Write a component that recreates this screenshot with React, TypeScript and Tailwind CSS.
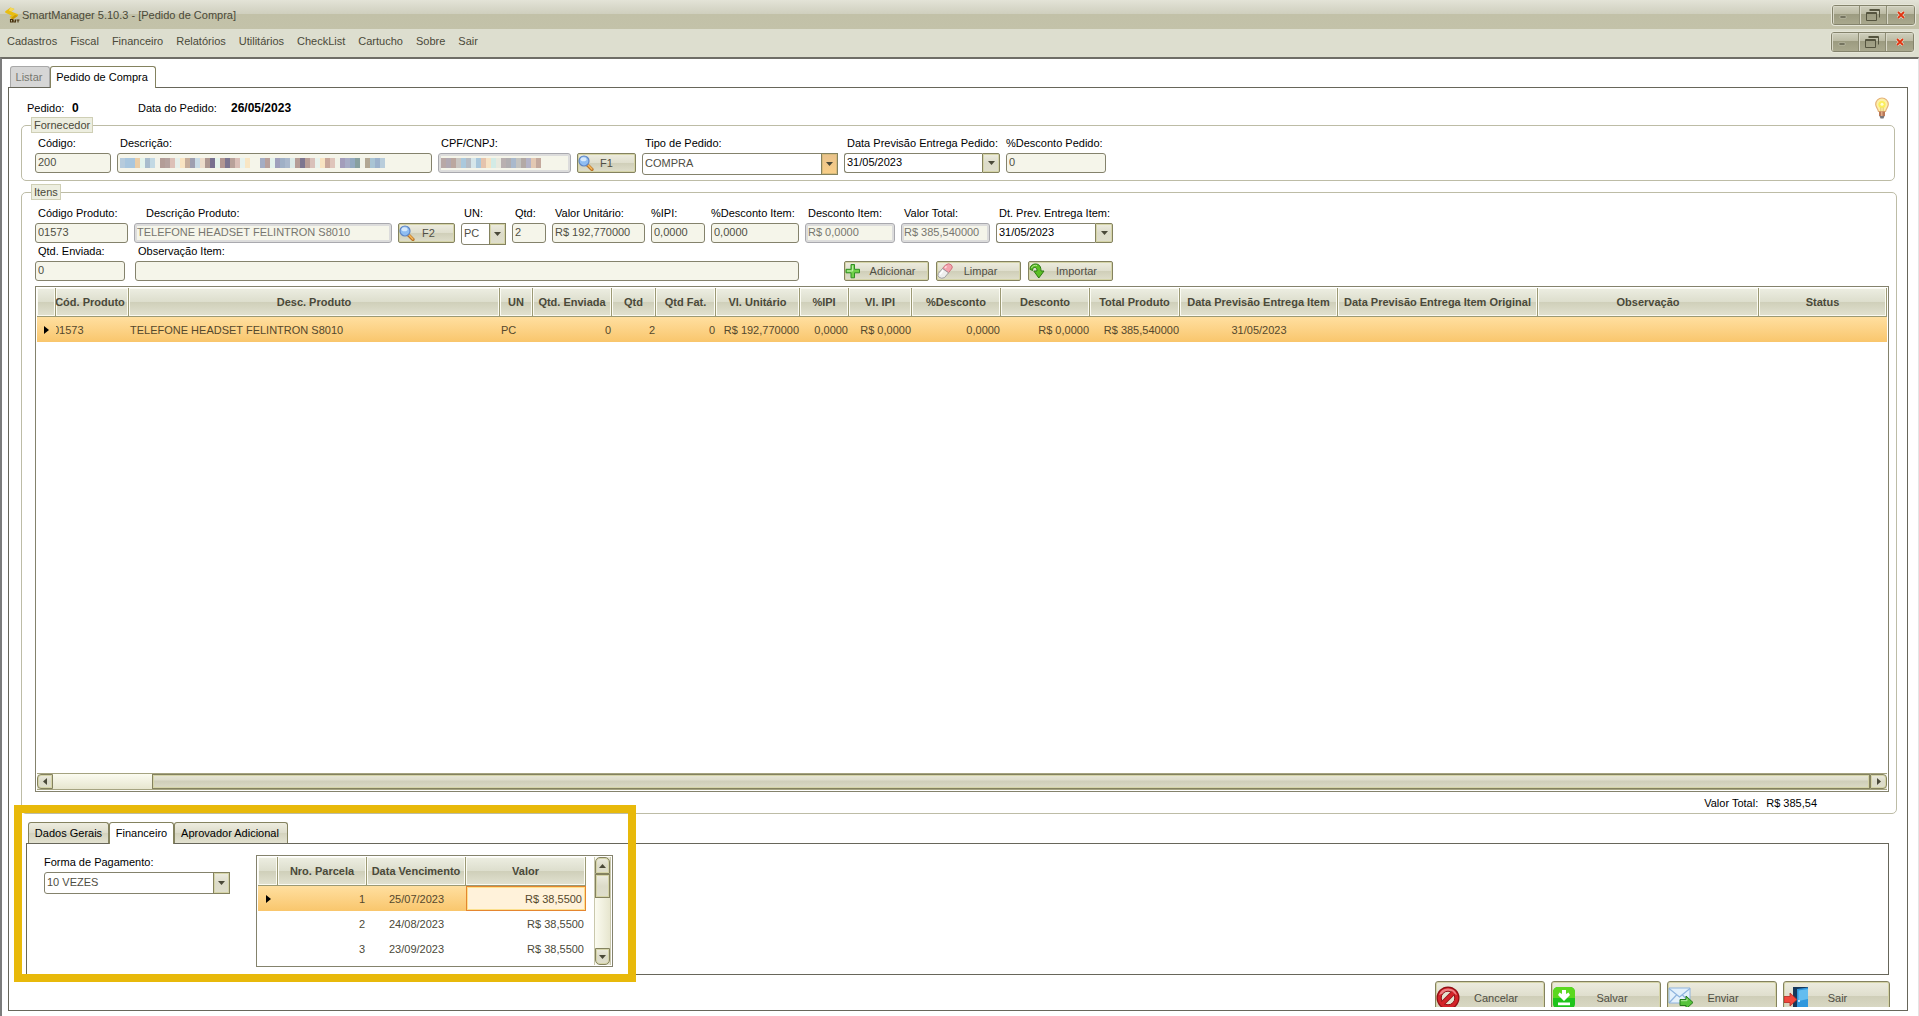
import type { ReactNode } from "react";

type Align = "left" | "center" | "right";

type Column = Readonly<{
  title: string;
  width?: number;
  align: Align;
  value: string;
}>;

const menuItems = [
  "Cadastros",
  "Fiscal",
  "Financeiro",
  "Relatórios",
  "Utilitários",
  "CheckList",
  "Cartucho",
  "Sobre",
  "Sair",
];

const columns: Column[] = [
  { title: "Cód. Produto", width: 73, align: "left", value: "01573" },
  {
    title: "Desc. Produto",
    width: 371,
    align: "left",
    value: "TELEFONE HEADSET FELINTRON S8010",
  },
  { title: "UN", width: 33, align: "left", value: "PC" },
  { title: "Qtd. Enviada", width: 79, align: "right", value: "0" },
  { title: "Qtd", width: 44, align: "right", value: "2" },
  { title: "Qtd Fat.", width: 60, align: "right", value: "0" },
  { title: "Vl. Unitário", width: 84, align: "right", value: "R$ 192,770000" },
  { title: "%IPI", width: 49, align: "right", value: "0,0000" },
  { title: "Vl. IPI", width: 63, align: "right", value: "R$ 0,0000" },
  { title: "%Desconto", width: 89, align: "right", value: "0,0000" },
  { title: "Desconto", width: 89, align: "right", value: "R$ 0,0000" },
  { title: "Total Produto", width: 90, align: "right", value: "R$ 385,540000" },
  {
    title: "Data Previsão Entrega Item",
    width: 158,
    align: "center",
    value: "31/05/2023",
  },
  {
    title: "Data Previsão Entrega Item Original",
    width: 200,
    align: "center",
    value: "",
  },
  { title: "Observação", width: 221, align: "left", value: "" },
  { title: "Status", align: "left", value: "" },
];

const installments = [
  { number: 1, dueDate: "25/07/2023", amount: "R$ 38,5500" },
  { number: 2, dueDate: "24/08/2023", amount: "R$ 38,5500" },
  { number: 3, dueDate: "23/09/2023", amount: "R$ 38,5500" },
];

const supplierMask = [
  "#b6cbdc", "#a8c6de", "#a8c6de", "#eacda6", "#e4f3ec", "#a9bccd", "#c3d9e4",
  "#f3f3ea", "#b39d97", "#b5a29e", "#dcc0b7", "#e7efea", "#f9e4c2", "#c7ae9b",
  "#9e9fb0", "#c9dbe6", "#ecdccb", "#ad9791", "#77708f", "#e4f3ec", "#b39792",
  "#7c7590", "#b8a19a", "#dabfb8", "#e7f2ee", "#f9e6c4", "#f5f5ea", "#f5f5ea",
  "#a4adc4", "#b8a09b", "#e4f1ec", "#9f9fbc", "#9fb0c6", "#a9b8cc", "#dceae8",
  "#b59d97", "#7d7690", "#b99e97", "#d9c1ba", "#e9f2ec", "#f8e3c1", "#c9a79a",
  "#dfc5bb", "#f1f3e8", "#a39dbb", "#a7acc6", "#93a9c0", "#87a09f", "#f0f2e8",
  "#b1a794", "#a9c4d4", "#9cb2cc", "#b9cddb",
];

const documentMask = [
  "#b8a8a6", "#b1a9b2", "#bba79f", "#c9c6c2", "#abc9dd", "#b6bcc4", "#d6e6ea",
  "#a9c7dc", "#e5c3ac", "#f6e2c4", "#d3ebe6", "#e8e9de", "#b9b0b0", "#b1aeb0",
  "#a9b9cc", "#c3c3c0", "#b3a9a5", "#b4b3c6", "#e3c8b2", "#c4a99d",
];

const raised =
  "border border-[#84825f] bg-linear-to-b from-[#edecdf] from-0% via-[#dcdbc9] via-50% to-[#dfdecb] shadow-[inset_0_0_0_1px_#d5d4a8]";
const headCell =
  "h-[29px] overflow-hidden border-r border-b border-[#9b9974] bg-[linear-gradient(#edeee2_0%,#dddecd_49%,#cfcfb9_50%,#e2e2d1_100%)] p-0 text-center font-bold text-[#4a4939] shadow-[inset_1px_1px_0_#fbfbf3,inset_-1px_-1px_0_#fbfbf3]";

function Field({
  id,
  label,
  className = "",
  labelClass = "pl-[3px]",
  children,
}: Readonly<{
  id: string;
  label: string;
  className?: string;
  labelClass?: string;
  children: ReactNode;
}>) {
  return (
    <div className={`flex shrink-0 flex-col gap-0.5 ${className}`}>
      <label
        htmlFor={id}
        className={`h-4 leading-4 whitespace-nowrap text-black ${labelClass}`}
      >
        {label}
      </label>
      {children}
    </div>
  );
}

function TextBox({
  id,
  value = "",
  disabled = false,
}: Readonly<{ id: string; value?: string; disabled?: boolean }>) {
  return (
    <input
      id={id}
      type="text"
      defaultValue={value}
      disabled={disabled}
      className="h-5 w-full rounded-[3px] border border-[#84826c] bg-[#f5f5ea] pb-0.5 pl-0.5 text-[#4f4e44] disabled:border-[#a9a9ae] disabled:text-[#77766f] disabled:shadow-[inset_0_0_0_2px_#dcdcdc]"
    />
  );
}

// Text box whose contents are hidden behind a mosaic
function MaskedBox({
  id,
  blocks,
  disabled = false,
}: Readonly<{ id: string; blocks: string[]; disabled?: boolean }>) {
  return (
    <div className="relative">
      <TextBox id={id} disabled={disabled} />
      <div className="pointer-events-none absolute top-[5px] left-[3px] flex h-2.5">
        {blocks.map((color, i) => (
          <span key={i} className="w-[5px]" style={{ backgroundColor: color }} />
        ))}
      </div>
    </div>
  );
}

function DownArrow() {
  return (
    <svg viewBox="0 0 7 4" className="h-1 w-[7px]" aria-hidden="true">
      <path d="M0 0h7L3.5 4z" fill="#4a4939" />
    </svg>
  );
}

function ComboBox({
  id,
  value,
  hot = false,
}: Readonly<{ id: string; value: string; hot?: boolean }>) {
  return (
    <div className="relative h-[22px]">
      <select
        id={id}
        defaultValue={value}
        className="h-full w-full appearance-none rounded-[3px] border border-[#84826c] bg-white pb-0.5 pl-0.5 text-[#4f4e44]"
      >
        <option>{value}</option>
      </select>
      <span
        className={`pointer-events-none absolute inset-y-0 right-0 flex w-[17px] items-center justify-center ${
          hot
            ? "border border-[#84825f] bg-linear-to-b from-[#e9c28c] to-[#f9cf87] shadow-[inset_0_0_0_1px_#d8bb7c]"
            : raised
        }`}
      >
        <DownArrow />
      </span>
    </div>
  );
}

function DateBox({ id, value }: Readonly<{ id: string; value: string }>) {
  return (
    <div className="flex h-5">
      <input
        id={id}
        type="text"
        defaultValue={value}
        className="h-5 w-full min-w-0 rounded-l-[3px] border border-r-0 border-[#84826c] bg-white pb-0.5 pl-0.5 text-black"
      />
      <button
        type="button"
        aria-label="Abrir calendário"
        className={`flex w-[18px] shrink-0 items-center justify-center rounded-r-[2px] ${raised}`}
      >
        <DownArrow />
      </button>
    </div>
  );
}

function ToolButton({
  icon,
  label,
  className,
  labelClass = "pr-1",
}: Readonly<{
  icon: ReactNode;
  label: string;
  className: string;
  labelClass?: string;
}>) {
  return (
    <button
      type="button"
      className={`flex h-5 shrink-0 items-center rounded-[2px] border border-[#84825f] bg-[linear-gradient(#edecdf_0%,#dfdecd_49%,#cfceb8_50%,#dfdecb_100%)] text-[#4f4e44] shadow-[inset_0_0_0_1px_#d5d4a8] ${className}`}
    >
      {icon}
      <span className={`flex-1 text-center ${labelClass}`}>{label}</span>
    </button>
  );
}

function SearchIcon() {
  return (
    <svg viewBox="0 0 16 16" className="size-4 shrink-0" aria-hidden="true">
      <path d="M9.5 10l4.500 4.500" stroke="#b9742a" strokeWidth="3.200" strokeLinecap="round" />
      <path d="M10 10l3.800 4" stroke="#f5b95a" strokeWidth="1.600" strokeLinecap="round" />
      <circle cx="6" cy="6" r="5" fill="#8fbdf2" stroke="#5f86c4" strokeWidth="1.200" />
      <ellipse cx="5.500" cy="4.200" rx="3" ry="2" fill="#d7e9fc" />
    </svg>
  );
}

function PlusIcon() {
  return (
    <svg viewBox="0 0 16 16" className="size-4 shrink-0" aria-hidden="true">
      <path
        d="M6 1.500h3.500v4.800h5v3.500h-5v5H6v-5H1V6.300h5z"
        fill="#6fd14a"
        stroke="#2f8f22"
        strokeLinejoin="round"
      />
      <path d="M7.700 2.500v5.500H2" stroke="#c9f2b4" fill="none" />
    </svg>
  );
}

function EraserIcon() {
  return (
    <svg viewBox="0 0 16 16" className="size-4 shrink-0" aria-hidden="true">
      <path d="M8.500 2Q12-.5 14.200 1.800T14.500 6L11.500 9.800 5.500 5.500z" fill="#f3a3ad" stroke="#c9636f" strokeWidth=".8" />
      <path d="M5.500 5.500l6 4.300-4 4.800q-3 1.400-5.200-.2T1.300 10.500z" fill="#eeeeee" stroke="#8d8d92" strokeWidth=".8" />
      <path d="M6.200 7.200L3 11.500" stroke="#ffffff" strokeWidth="1.600" />
      <path d="M9.500 3.200L8 5" stroke="#fcd9dd" strokeWidth="1.600" />
    </svg>
  );
}

function ImportIcon() {
  return (
    <svg viewBox="0 0 16 16" className="size-4 shrink-0" aria-hidden="true">
      <path
        d="M1 6.500C1 2.500 4 .8 7 1c3.500.2 5 2.800 5 7h3l-5.200 7L4.800 8H8c0-2.500-.8-3.500-2.300-3.500S3.500 5.300 3.700 7.500z"
        fill="#5cbf25"
        stroke="#2c7a12"
        strokeLinejoin="round"
      />
      <path d="M2.500 5C3.500 2.500 6 2 8 2.500" stroke="#b5e88f" fill="none" />
    </svg>
  );
}

function BulbIcon() {
  return (
    <svg viewBox="0 0 16 22" className="h-[22px] w-4" role="img" aria-label="Dica">
      <path
        d="M8 1a6.300 6.300 0 0 0-6.300 6.300c0 2.700 2 3.900 2.800 7.200h7c.8-3.300 2.800-4.500 2.800-7.200A6.300 6.300 0 0 0 8 1z"
        fill="#fdf0a8"
        stroke="#e5b27a"
        strokeWidth="1.200"
      />
      <circle cx="8" cy="7.500" r="3.600" fill="#fbee5c" />
      <circle cx="8" cy="7.300" r="1.500" fill="#fffdd8" />
      <path d="M6.800 10.500v4M9.200 10.500v4" stroke="#d9c069" strokeWidth=".8" />
      <path d="M5 14.500h6V19H5z" fill="#b97858" />
      <path d="M7 14.500h1.500V19H7z" fill="#e0ab8a" />
      <path d="M5.500 19h5L9.500 21.500h-3z" fill="#77777c" />
    </svg>
  );
}

function AppLogo() {
  return (
    <svg viewBox="0 0 16 16" className="size-4" aria-hidden="true">
      <path
        d="M6.500.5L1.300 4.300q-.6 1 .5 1.700l6 2.400L5.500 10l3.200 2.600 5.200-3.800q.5-1-.6-1.800L7.200 4.400 10.500 2z"
        fill="#e8bd12"
      />
      <path d="M6.500.5L10.500 2 7.200 4.400 4.800 3.500z" fill="#f5d95a" />
      <path d="M11 8l2.900.8-5.200 3.800L7 11.200z" fill="#c99a08" />
      <path
        d="M6.500 12.500h2v2.500h-2zM9.800 12.500V15h1.700v-2.500M12.500 13h3M14 13v2.500"
        fill="none"
        stroke="#4a3410"
        strokeWidth="1.100"
      />
    </svg>
  );
}

function CancelIcon() {
  return (
    <svg viewBox="0 0 24 24" className="size-6 shrink-0" aria-hidden="true">
      <circle cx="12" cy="12" r="11.500" fill="#8f1014" />
      <circle cx="12" cy="12" r="10.300" fill="#d4232a" />
      <path d="M3 9a9.500 9.500 0 0 1 18 0Q12 4 3 9z" fill="#ee7f82" />
      <circle cx="12" cy="12" r="6.800" fill="#e3e2d0" stroke="#8f1014" />
      <path d="M7 17L17 7" stroke="#8f1014" strokeWidth="5" />
      <path d="M6.500 17.500l11-11" stroke="#d4232a" strokeWidth="3.400" />
    </svg>
  );
}

function SaveIcon() {
  return (
    <svg viewBox="0 0 24 24" className="size-6 shrink-0" aria-hidden="true">
      <rect x="1" y="1" width="22" height="22" rx="5" fill="#1fc41c" />
      <path d="M1 12V6a5 5 0 0 1 5-5h12a5 5 0 0 1 5 5v6z" fill="#5bd81f" />
      <path d="M10 4h4v4l2.500-1.500L18 9l-6 6-6-6 1.500-2.500L10 8zM6 16.500h12v2.800H6z" fill="#ffffff" />
    </svg>
  );
}

function SendIcon() {
  return (
    <svg viewBox="0 0 26 24" className="h-6 w-[26px] shrink-0" aria-hidden="true">
      <path d="M1 2h21v15H1z" fill="#e3f0fb" stroke="#8fb4de" />
      <path d="M1 2.500l10.500 8.500L22 2.500M1 17l7.500-8M22 17l-7.500-8" fill="none" stroke="#8fb4de" strokeWidth="1.200" />
      <path d="M12 13.500h6V10l7 6.500-7 6.500v-3.500h-6z" fill="#56c23a" stroke="#24791a" strokeLinejoin="round" />
      <path d="M13 14.700h6v-2.200" stroke="#b4e99f" fill="none" />
    </svg>
  );
}

function ExitIcon() {
  return (
    <svg viewBox="0 0 26 24" className="h-6 w-[26px] shrink-0" aria-hidden="true">
      <path d="M9 1h15v23H9z" fill="#17375a" />
      <path d="M13 3l11-1.500V24H13z" fill="#2f97dd" />
      <path d="M14.500 4.500L24 3v10l-9.500 2z" fill="#63bdf0" />
      <circle cx="15" cy="15" r="1" fill="#e8f6ff" />
      <path d="M0 10.500h6V7l7 6.500L6 20v-3.500H0z" fill="#f0473c" stroke="#b82a22" strokeWidth=".8" />
    </svg>
  );
}

function WindowButtons() {
  const button =
    "flex h-[18px] w-[27px] items-center justify-center border-r border-[#8d8c74] bg-[linear-gradient(#cfcfbd_0%,#bcbba4_44%,#9c9b80_45%,#a9a88d_100%)] shadow-[inset_1px_1px_0_#d9d8c8] last:border-r-0";
  return (
    <div className="flex overflow-hidden rounded-[3px] border border-[#84836c] shadow-[0_0_0_1px_#e6e6d8]">
      <button type="button" aria-label="Minimizar" className={button}>
        <svg viewBox="0 0 16 12" className="h-3 w-4">
          <path d="M2 7h6v2H2z" fill="#55543f" stroke="#d5d4c4" strokeWidth=".5" />
        </svg>
      </button>
      <button type="button" aria-label="Restaurar" className={button}>
        <svg viewBox="0 0 16 14" className="h-3.5 w-4" fill="none" stroke="#55543f">
          <path d="M4.500 1.500h10v8M4.500 2.500h10" />
          <path d="M1.500 4.500h10v8h-10zM1.500 5.500h10" />
        </svg>
      </button>
      <button type="button" aria-label="Fechar" className={button}>
        <svg viewBox="0 0 10 8" className="h-2 w-2.5">
          <path d="M2 1l6 6M8 1L2 7" stroke="#f3e6d8" strokeWidth="3" />
          <path d="M2 1l6 6M8 1L2 7" stroke="#e0330f" strokeWidth="1.800" />
        </svg>
      </button>
    </div>
  );
}

function RowMarker() {
  return (
    <svg viewBox="0 0 5 8" className="mx-auto h-2 w-[5px]" aria-hidden="true">
      <path d="M0 0l5 4-5 4z" fill="#000000" />
    </svg>
  );
}

const alignClass: Record<Align, string> = {
  left: "text-left",
  center: "text-center",
  right: "text-right",
};

function ItemsGrid() {
  return (
    <div className="mt-[5px] flex flex-1 flex-col border border-[#84826c] p-px">
      <table className="w-full table-fixed border-separate border-spacing-0">
        <colgroup>
          <col className="w-[19px]" />
          {columns.map((column) => (
            <col key={column.title} style={{ width: column.width }} />
          ))}
        </colgroup>
        <thead>
          <tr>
            <th className={headCell} aria-label="Linha atual" />
            {columns.map((column, i) => (
              <th key={column.title} scope="col" className={headCell}>
                <span
                  className={`flex justify-center whitespace-nowrap ${i === 0 ? "-ml-1" : ""}`}
                >
                  {column.title}
                </span>
              </th>
            ))}
          </tr>
        </thead>
        <tbody>
          <tr className="bg-linear-to-b from-[#ffdf9f] to-[#f9c66c] text-[#55482c]">
            <td className="h-[25px] p-0">
              <RowMarker />
            </td>
            {columns.map((column, i) => (
              <td
                key={column.title}
                className={`overflow-hidden p-0 px-px whitespace-nowrap ${alignClass[column.align]}`}
              >
                <span className={i === 0 ? "-ml-1" : ""}>{column.value}</span>
              </td>
            ))}
          </tr>
        </tbody>
      </table>
      <div className="mt-auto flex h-[17px] border-y border-[#a5a380] bg-linear-to-b from-[#fbfbf0] to-[#e7e6cf]">
        <button
          type="button"
          aria-label="Rolar para a esquerda"
          className={`flex w-4 items-center justify-center rounded-l-[4px] ${raised}`}
        >
          <svg viewBox="0 0 4 7" className="h-[7px] w-1">
            <path d="M4 0v7L0 3.500z" fill="#4a4939" />
          </svg>
        </button>
        <div className="w-[99px]" />
        <div className="flex-1 border border-[#84825f] bg-[linear-gradient(#e9e8d8_0%,#dddcca_40%,#cfceb9_45%,#dbdac5_100%)] shadow-[inset_0_0_0_1px_#d5d4a8]" />
        <button
          type="button"
          aria-label="Rolar para a direita"
          className={`flex w-[17px] items-center justify-center rounded-r-[4px] ${raised}`}
        >
          <svg viewBox="0 0 4 7" className="h-[7px] w-1">
            <path d="M0 0v7l4-3.500z" fill="#4a4939" />
          </svg>
        </button>
      </div>
    </div>
  );
}

function InstallmentsGrid() {
  return (
    <div className="flex h-28 w-[357px] justify-between border border-[#84826c] p-px">
      <table className="w-[328px] table-fixed border-separate border-spacing-0 self-start">
        <colgroup>
          <col className="w-5" />
          <col className="w-[89px]" />
          <col className="w-[99px]" />
          <col className="w-[120px]" />
        </colgroup>
        <thead>
          <tr>
            <th className={headCell} aria-label="Linha atual" />
            <th scope="col" className={headCell}>Nro. Parcela</th>
            <th scope="col" className={headCell}>
              <span className="flex justify-center whitespace-nowrap">
                Data Vencimento
              </span>
            </th>
            <th scope="col" className={headCell}>Valor</th>
          </tr>
        </thead>
        <tbody>
          {installments.map((item, i) => (
            <tr
              key={item.number}
              className={
                i === 0
                  ? "bg-linear-to-b from-[#ffdf9f] to-[#f9c66c] text-[#55482c]"
                  : "text-[#4a4939]"
              }
            >
              <td className="h-[25px] p-0">{i === 0 && <RowMarker />}</td>
              <td className="p-0 pr-0.5 text-right">{item.number}</td>
              <td className="p-0 text-center">{item.dueDate}</td>
              <td
                className={`p-0 text-right ${
                  i === 0
                    ? "border border-[#e5862f] bg-[#fff2da] pr-[3px] shadow-[inset_0_0_0_1px_#fce08c]"
                    : "pr-0.5"
                }`}
              >
                {item.amount}
              </td>
            </tr>
          ))}
        </tbody>
      </table>
      <div className="flex w-[17px] flex-col border-x border-[#c9c8ac] bg-linear-to-r from-[#fbfbf0] to-[#e7e6cf]">
        <button
          type="button"
          aria-label="Rolar para cima"
          className={`flex h-[17px] items-center justify-center rounded-t-[5px] ${raised}`}
        >
          <svg viewBox="0 0 7 4" className="h-1 w-[7px]">
            <path d="M0 4h7L3.500 0z" fill="#4a4939" />
          </svg>
        </button>
        <div className={`h-6 ${raised}`} />
        <button
          type="button"
          aria-label="Rolar para baixo"
          className={`mt-auto flex h-[17px] items-center justify-center rounded-b-[5px] ${raised}`}
        >
          <DownArrow />
        </button>
      </div>
    </div>
  );
}

// The title straddles the top border
function Group({
  title,
  className,
  children,
}: Readonly<{ title: string; className: string; children: ReactNode }>) {
  return (
    <section
      aria-label={title}
      className={`flex flex-col rounded-[5px] border border-[#bdbca6] pl-[13px] ${className}`}
    >
      <h2 className="-mt-[9px] -ml-1 h-4 self-start border border-[#cfcfb5] bg-[#edeee0] px-0.5 leading-[14px] text-[#4a4939]">
        {title}
      </h2>
      {children}
    </section>
  );
}

function FooterButton({
  icon,
  label,
  className = "w-[110px]",
  labelClass = "pr-3",
}: Readonly<{
  icon: ReactNode;
  label: string;
  className?: string;
  labelClass?: string;
}>) {
  return (
    <button
      type="button"
      className={`flex h-[34px] items-center rounded-[3px] border border-[#84825f] bg-[linear-gradient(#edecdf_0%,#dfdecd_44%,#cfceb8_45%,#dfdecb_100%)] text-[#4f4e44] shadow-[inset_0_0_0_1px_#d5d4a8] ${className}`}
    >
      {icon}
      <span className={`flex-1 text-center ${labelClass}`}>{label}</span>
    </button>
  );
}

export default function App() {
  return (
    <div className="flex min-h-screen flex-col bg-white font-['Liberation_Sans',Arial,sans-serif] text-[11px] leading-4">
      <header>
        <div className="flex h-[29px] items-center justify-between bg-[linear-gradient(#e3e3d7_0%,#cfcfbe_48%,#c2c1a8_49%,#c3c2a9_100%)] pr-1 pl-1">
          <div className="flex items-center gap-0.5">
            <AppLogo />
            <h1 className="text-[#4a4939]">SmartManager 5.10.3 - [Pedido de Compra]</h1>
          </div>
          <WindowButtons />
        </div>
        <div className="flex h-7 items-center justify-between bg-[#dddecf] pr-[5px] pb-0.5 pl-[7px]">
          <nav className="flex gap-[13px]">
            {menuItems.map((item) => (
              <button key={item} type="button" className="pb-0.5 text-[#4a4939]">
                {item}
              </button>
            ))}
          </nav>
          <WindowButtons />
        </div>
      </header>

      <main className="flex flex-1 flex-col border-t-2 border-r border-l-2 border-t-[#6e6d66] border-r-[#e4e4e4] border-l-[#7c7c7c] pt-[7px] pr-2.5 pb-[5px] pl-1.5">
        <div role="tablist" className="flex h-[21px] pl-0.5">
          <button
            type="button"
            role="tab"
            aria-selected="false"
            className="w-10 rounded-t-[3px] border border-b-0 border-[#a8a8a8] bg-[#d6d6d6] pr-0.5 text-[#77766f]"
          >
            Listar
          </button>
          <button
            type="button"
            role="tab"
            aria-selected="true"
            className="z-10 -mb-px w-[106px] rounded-t-[3px] border border-b-0 border-[#84825f] bg-white pr-0.5 pb-px text-black"
          >
            Pedido de Compra
          </button>
        </div>

        <div className="flex flex-1 flex-col border border-[#67665a] pr-2.5 pb-[3px] pl-3">
          <div className="flex h-[29px] items-start justify-between pt-[9px] pr-[7px] pl-1.5">
            <div className="flex items-center pt-[3px] text-black">
              <span className="w-[45px]">Pedido:</span>
              <b className="w-[66px] text-xs">0</b>
              <span className="w-[93px]">Data do Pedido:</span>
              <b className="text-xs">26/05/2023</b>
            </div>
            <BulbIcon />
          </div>

          <Group title="Fornecedor" className="mt-2 mr-0.5 pb-[5px]">
            <div className="flex items-start gap-1.5 pt-0.5">
              <Field id="codigo" label="Código:" className="w-[76px]">
                <TextBox id="codigo" value="200" />
              </Field>
              <Field id="descricao" label="Descrição:" className="w-[315px]">
                <MaskedBox id="descricao" blocks={supplierMask} />
              </Field>
              <Field id="cnpj" label="CPF/CNPJ:" className="w-[133px]">
                <MaskedBox id="cnpj" blocks={documentMask} disabled />
              </Field>
              <ToolButton
                icon={<SearchIcon />}
                label="F1"
                className="mt-[18px] w-[59px]"
                labelClass="pr-4"
              />
              <Field id="tipo" label="Tipo de Pedido:" className="w-[196px]">
                <ComboBox id="tipo" value="COMPRA" hot />
              </Field>
              <Field
                id="previsao"
                label="Data Previsão Entrega Pedido:"
                className="w-[156px]"
              >
                <DateBox id="previsao" value="31/05/2023" />
              </Field>
              <Field
                id="desconto-pedido"
                label="%Desconto Pedido:"
                className="w-[100px]"
                labelClass=""
              >
                <TextBox id="desconto-pedido" value="0" />
              </Field>
            </div>
          </Group>

          <Group title="Itens" className="mt-[11px] flex-1 pr-[7px]">
            <div className="flex items-start gap-1.5 pt-[5px]">
              <Field id="cod-produto" label="Código Produto:" className="w-[93px]">
                <TextBox id="cod-produto" value="01573" />
              </Field>
              <Field
                id="desc-produto"
                label="Descrição Produto:"
                className="w-[258px]"
                labelClass="pl-3"
              >
                <TextBox
                  id="desc-produto"
                  value="TELEFONE HEADSET FELINTRON S8010"
                  disabled
                />
              </Field>
              <ToolButton
                icon={<SearchIcon />}
                label="F2"
                className="mt-[18px] w-[57px]"
                labelClass="pr-3"
              />
              <Field id="un" label="UN:" className="-mb-0.5 w-[45px]">
                <ComboBox id="un" value="PC" />
              </Field>
              <Field id="qtd" label="Qtd:" className="w-[34px]">
                <TextBox id="qtd" value="2" />
              </Field>
              <Field id="valor-unitario" label="Valor Unitário:" className="w-[93px]">
                <TextBox id="valor-unitario" value="R$ 192,770000" />
              </Field>
              <Field id="ipi" label="%IPI:" className="w-[54px]" labelClass="">
                <TextBox id="ipi" value="0,0000" />
              </Field>
              <Field
                id="perc-desconto"
                label="%Desconto Item:"
                className="w-[88px]"
                labelClass=""
              >
                <TextBox id="perc-desconto" value="0,0000" />
              </Field>
              <Field id="desconto" label="Desconto Item:" className="w-[90px]">
                <TextBox id="desconto" value="R$ 0,0000" disabled />
              </Field>
              <Field id="valor-total" label="Valor Total:" className="w-[89px]">
                <TextBox id="valor-total" value="R$ 385,540000" disabled />
              </Field>
              <Field
                id="previsao-item"
                label="Dt. Prev. Entrega Item:"
                className="w-[117px]"
              >
                <DateBox id="previsao-item" value="31/05/2023" />
              </Field>
            </div>

            <div className="flex items-end">
              <Field id="qtd-enviada" label="Qtd. Enviada:" className="mr-2.5 w-[90px]">
                <TextBox id="qtd-enviada" value="0" />
              </Field>
              <Field id="observacao" label="Observação Item:" className="mr-[45px] w-[664px]">
                <TextBox id="observacao" />
              </Field>
              <div className="flex gap-[7px]">
                <ToolButton icon={<PlusIcon />} label="Adicionar" className="w-[85px]" />
                <ToolButton
                  icon={<EraserIcon />}
                  label="Limpar"
                  className="w-[85px]"
                  labelClass="pr-3"
                />
                <ToolButton icon={<ImportIcon />} label="Importar" className="w-[85px]" />
              </div>
            </div>

            <ItemsGrid />

            <div className="flex h-[21px] items-center justify-end gap-2 pr-[72px] text-black">
              <span>Valor Total:</span>
              <span>R$ 385,54</span>
            </div>
          </Group>

          <section className="relative pt-2 pr-2 pl-[5px]">
            <div role="tablist" className="flex h-[21px] pl-0.5">
              <button
                type="button"
                role="tab"
                aria-selected="false"
                className="w-[81px] rounded-t-[3px] border border-b-0 border-[#84825f] bg-[linear-gradient(#edecdf_0%,#dddccb_49%,#d3d2bd_50%,#e2e1d0_100%)] text-black"
              >
                Dados Gerais
              </button>
              <button
                type="button"
                role="tab"
                aria-selected="true"
                className="z-10 -mb-px w-[65px] rounded-t-[3px] border border-b-0 border-[#84825f] bg-white pb-px text-black"
              >
                Financeiro
              </button>
              <button
                type="button"
                role="tab"
                aria-selected="false"
                className="w-[114px] rounded-t-[3px] border border-b-0 border-[#84825f] bg-[linear-gradient(#edecdf_0%,#dddccb_49%,#d3d2bd_50%,#e2e1d0_100%)] pr-0.5 text-black"
              >
                Aprovador Adicional
              </button>
            </div>
            <div className="flex gap-[26px] border border-[#67665a] pt-[11px] pb-[7px] pl-[17px]">
              <Field
                id="pagamento"
                label="Forma de Pagamento:"
                className="-mt-px w-[186px]"
                labelClass=""
              >
                <ComboBox id="pagamento" value="10 VEZES" />
              </Field>
              <InstallmentsGrid />
            </div>
            <div className="pointer-events-none absolute -top-[9px] -bottom-[7px] -left-[7px] w-[622px] border-8 border-[#e8b90a]" />
          </section>

          <div className="mt-1.5 flex h-[26px] justify-end gap-1.5 overflow-hidden pr-[7px]">
            <FooterButton icon={<CancelIcon />} label="Cancelar" />
            <FooterButton icon={<SaveIcon />} label="Salvar" />
            <FooterButton icon={<SendIcon />} label="Enviar" labelClass="pr-6" />
            <FooterButton
              icon={<ExitIcon />}
              label="Sair"
              className="w-[107px]"
              labelClass="pr-6"
            />
          </div>
        </div>
      </main>
    </div>
  );
}
